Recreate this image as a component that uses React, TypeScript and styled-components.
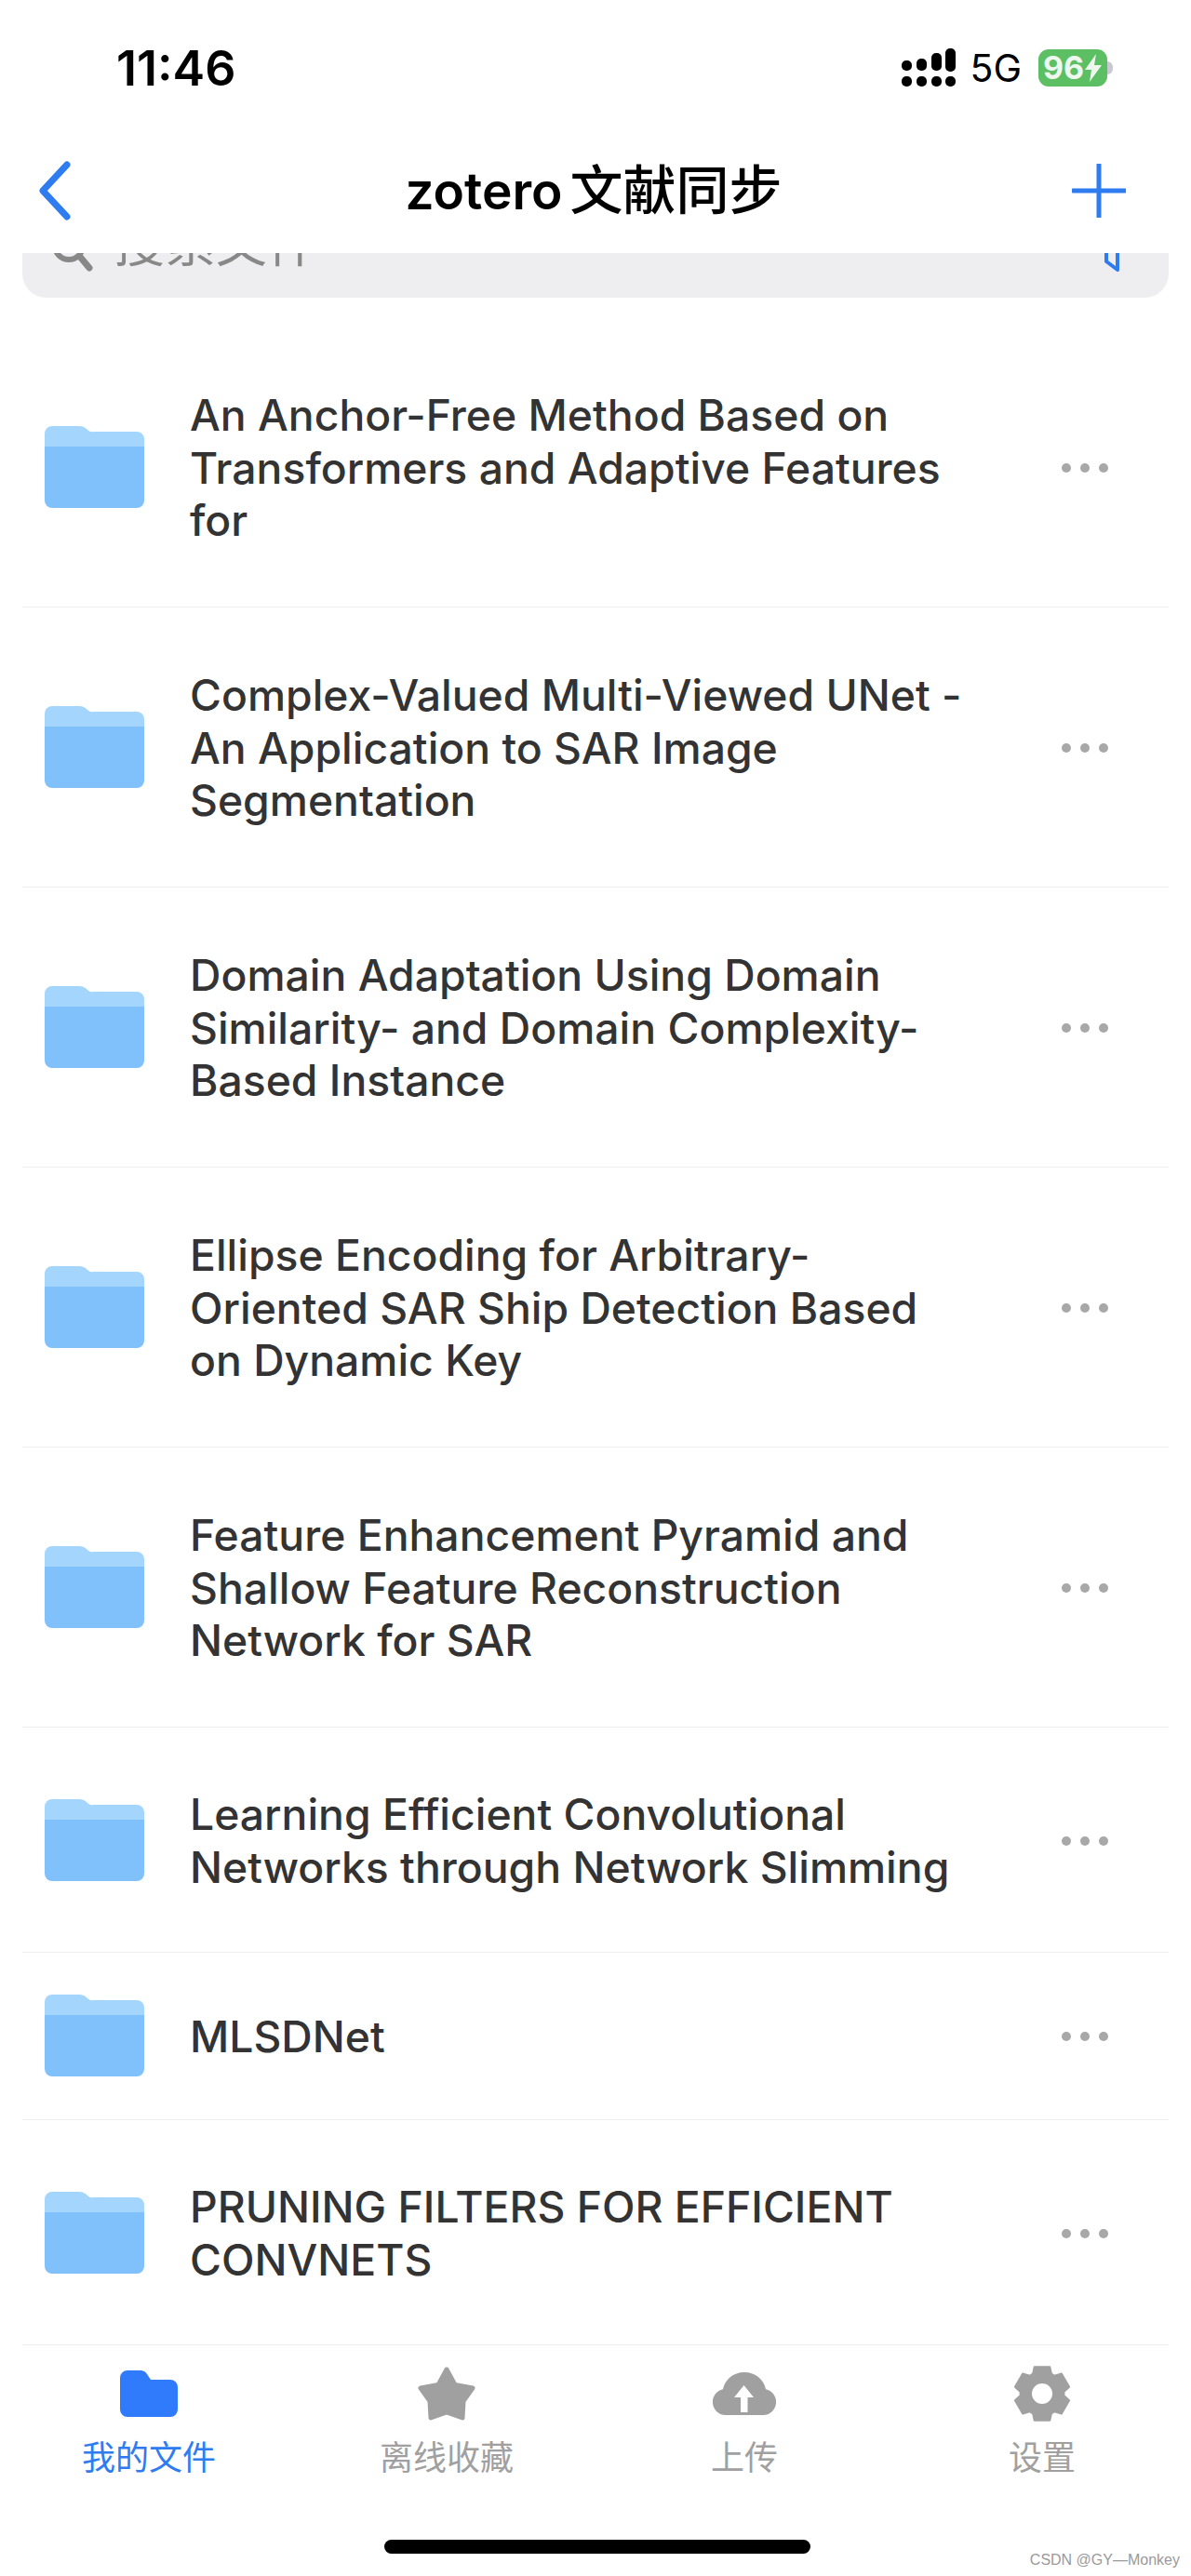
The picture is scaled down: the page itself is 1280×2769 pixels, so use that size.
import { FC } from "react";
import styled, { createGlobalStyle } from "styled-components";

interface IFile {
	id: number;
	lines: string[];
}

const files: IFile[] = [
	{ id: 1, lines: ["An Anchor-Free Method Based on", "Transformers and Adaptive Features", "for"] },
	{ id: 2, lines: ["Complex-Valued Multi-Viewed UNet -", "An Application to SAR Image", "Segmentation"] },
	{ id: 3, lines: ["Domain Adaptation Using Domain", "Similarity- and Domain Complexity-", "Based Instance"] },
	{ id: 4, lines: ["Ellipse Encoding for Arbitrary-", "Oriented SAR Ship Detection Based", "on Dynamic Key"] },
	{ id: 5, lines: ["Feature Enhancement Pyramid and", "Shallow Feature Reconstruction", "Network for SAR"] },
	{ id: 6, lines: ["Learning Efficient Convolutional", "Networks through Network Slimming"] },
	{ id: 7, lines: ["MLSDNet"] },
	{ id: 8, lines: ["PRUNING FILTERS FOR EFFICIENT", "CONVNETS"] },
];

const FolderIcon: FC = () => (
	<FolderSvg viewBox="0 0 107 88">
		<path d="M0 8a8 8 0 0 1 8-8h28c5 0 7 1 10 4s5 2 9 2h44a8 8 0 0 1 8 8v16H0z" fill="#a4d6fd" />
		<path d="M0 22h107v58a8 8 0 0 1-8 8H8a8 8 0 0 1-8-8z" fill="#80c1fc" />
	</FolderSvg>
);

// six flat teeth around the centre, like the settings icon in the tab bar
const gearPath = () => {
	const point = (radius: number, angle: number) => {
		const rad = (angle * Math.PI) / 180;
		return `${(31 + radius * Math.cos(rad)).toFixed(2)} ${(31 + radius * Math.sin(rad)).toFixed(2)}`;
	};
	const parts: string[] = [];
	for (let i = 0; i < 6; i++) {
		const a = -90 + i * 60;
		parts.push(point(23.5, a - 25), point(30, a - 16), point(30, a + 16), point(23.5, a + 25));
	}
	return `M${parts.join("L")}z`;
};

const tabs = [
	{
		label: "我的文件",
		active: true,
		icon: (
			<svg width="62" height="50" viewBox="0 0 62 50">
				<path d="M0 8a8 8 0 0 1 8-8h14c3 0 5 1 7 4l4 6h21a8 8 0 0 1 8 8v24a8 8 0 0 1-8 8H8a8 8 0 0 1-8-8z" fill="#2f7bfb" />
			</svg>
		),
	},
	{
		label: "离线收藏",
		active: false,
		icon: (
			<svg width="62" height="58" viewBox="0 0 62 58">
				<path
					d="M31 3l9 16.500 19 3.500-10 14-1 18-17-6-17 6-1-18-10-14 19-3.500z"
					fill="#a0a0a0"
					stroke="#a0a0a0"
					strokeWidth="5"
					strokeLinejoin="round"
				/>
			</svg>
		),
	},
	{
		label: "上传",
		active: false,
		icon: (
			<svg width="68" height="46" viewBox="0 0 68 46">
				<path d="M14 46a14 14 0 0 1-3-27.700C13 8 22 0 34 0s21 8 23 18.300A14 14 0 0 1 54 46z" fill="#a0a0a0" />
				<path d="M33.500 14L44 27h-6.500v16H30V27h-7z" fill="#fff" />
			</svg>
		),
	},
	{
		label: "设置",
		active: false,
		icon: (
			<svg width="62" height="62" viewBox="0 0 62 62">
				<path d={gearPath()} fill="#a0a0a0" stroke="#a0a0a0" strokeWidth="2" strokeLinejoin="round" />
				<circle cx="31" cy="31" r="11" fill="#fff" />
			</svg>
		),
	},
];

const App: FC = () => {
	return (
		<Page>
			<GlobalStyle />

			<StatusBar>
				<Time>11:46</Time>
				<StatusRight>
					<svg width="58" height="41" viewBox="0 0 58 41">
						<g fill="#000">
							<rect x="0" y="13" width="11" height="11" rx="5" />
							<rect x="16" y="11" width="11" height="13" rx="5" />
							<rect x="32" y="5" width="11" height="19" rx="5" />
							<rect x="47" y="0" width="11" height="25" rx="5" />
							<rect x="0" y="30" width="11" height="11" rx="5" />
							<rect x="16" y="30" width="11" height="11" rx="5" />
							<rect x="32" y="30" width="11" height="11" rx="5" />
							<rect x="47" y="30" width="11" height="11" rx="5" />
						</g>
					</svg>
					<Network>5G</Network>
					<Battery>
						96
						<svg width="20" height="30" viewBox="0 0 20 30">
							<path d="M13 0L1 17h7l-2 13 13-18h-8z" fill="#eef8ee" />
						</svg>
						<BatteryNub />
					</Battery>
				</StatusRight>
			</StatusBar>

			<NavBar>
				<svg width="36" height="64" viewBox="0 0 36 64">
					<path d="M31 4L5 32l26 28" fill="none" stroke="#2f7bf0" strokeWidth="7" strokeLinecap="round" strokeLinejoin="round" />
				</svg>
				<Title>
					zotero<TitleCjk>文献同步</TitleCjk>
				</Title>
				<AddIcon width="58" height="58" viewBox="0 0 58 58">
					<path d="M29 1v56M1 29h56" fill="none" stroke="#2f7bf0" strokeWidth="5" strokeLinecap="round" />
				</AddIcon>
			</NavBar>

			<SearchBar>
				<SearchLeft>
					<svg width="46" height="46" viewBox="0 0 46 46">
						<circle cx="20" cy="18" r="15" fill="none" stroke="#888" strokeWidth="6" />
						<path d="M32 30l10 12" fill="none" stroke="#888" strokeWidth="7" strokeLinecap="round" />
					</svg>
					<SearchText>搜索文件</SearchText>
				</SearchLeft>
				<svg width="16" height="44" viewBox="0 0 16 44">
					<path d="M2 0v33l12 9V0" fill="none" stroke="#2f7bf0" strokeWidth="4" strokeLinejoin="round" />
				</svg>
			</SearchBar>

			<List>
				{files.map((file) => (
					<Row key={file.id} $lines={file.lines.length}>
						<FolderIcon />
						<Name>
							{file.lines.map((line) => (
								<NameLine key={line}>{line}</NameLine>
							))}
						</Name>
						<Dots>
							<Dot />
							<Dot />
							<Dot />
						</Dots>
					</Row>
				))}
			</List>

			<TabBar>
				<TabGrid>
					{tabs.map((tab) => (
						<Tab key={tab.label} $active={tab.active}>
							<TabIcon>{tab.icon}</TabIcon>
							{tab.label}
						</Tab>
					))}
				</TabGrid>
			</TabBar>

			<HomeIndicator />
			<Watermark>CSDN @GY—Monkey</Watermark>
		</Page>
	);
};

export default App;

const rowPadding: Record<number, string> = {
	1: "45px 0 44px 24px",
	2: "65px 0 63px 24px",
	3: "66px 0 64.5px 24px",
};

const GlobalStyle = createGlobalStyle`
	* {
		box-sizing: border-box;
	}

	body {
		margin: 0;
		background-color: #fff;
	}
`;

const Page = styled.div`
	position: relative;
	width: 1280px;
	height: 2769px;
	display: flex;
	flex-direction: column;
	overflow: hidden;
	background-color: #fff;
	font-family: Inter, "Noto Sans CJK SC", sans-serif;
	color: #000;
`;

const StatusBar = styled.div`
	flex-shrink: 0;
	height: 142px;
	padding: 42px 90px 0 125px;
	display: flex;
	justify-content: space-between;
	align-items: flex-start;
`;

const Time = styled.span`
	font-size: 52px;
	line-height: 64px;
	font-weight: 600;
`;

const StatusRight = styled.div`
	margin-top: 10px;
	display: flex;
	align-items: center;
	gap: 15px;
`;

const Network = styled.span`
	margin-right: 3px;
	font-size: 41px;
	line-height: 40px;
	font-weight: 400;
`;

const Battery = styled.div`
	position: relative;
	width: 74px;
	height: 40px;
	display: flex;
	align-items: center;
	justify-content: center;
	border-radius: 11px;
	background-color: #5cbf64;
	color: #eef8ee;
	font-size: 34px;
	font-weight: 700;
`;

const BatteryNub = styled.span`
	position: absolute;
	top: 13px;
	right: -6px;
	width: 6px;
	height: 14px;
	border-radius: 0 7px 7px 0;
	background-color: #c9c8d2;
`;

const NavBar = styled.div`
	flex-shrink: 0;
	height: 130px;
	padding: 0 70px 5px 41px;
	display: grid;
	grid-template-columns: 1fr auto 1fr;
	align-items: center;
`;

const AddIcon = styled.svg`
	justify-self: end;
`;

const Title = styled.h1`
	margin: 0 0 0 25px;
	display: flex;
	align-items: center;
	gap: 8px;
	font-size: 55px;
	line-height: 64px;
	font-weight: 600;
`;

const TitleCjk = styled.span`
	font-size: 57px;
	font-weight: 500;
`;

const SearchBar = styled.div`
	flex-shrink: 0;
	height: 48px;
	margin: 0 24px;
	padding: 0 53px 28px 30px;
	display: flex;
	align-items: flex-end;
	justify-content: space-between;
	overflow: hidden;
	border-radius: 0 0 26px 26px;
	background-color: #eeeef0;
`;

const SearchLeft = styled.div`
	display: flex;
	align-items: flex-end;
	gap: 22px;
`;

const SearchText = styled.span`
	font-size: 55px;
	line-height: 62px;
	color: #888;
`;

const List = styled.ul`
	flex: 1;
	margin: 32px 24px 0;
	padding: 0;
	list-style: none;
`;

const Row = styled.li<{ $lines: number }>`
	padding: ${({ $lines }) => rowPadding[$lines]};
	display: flex;
	align-items: center;
	border-bottom: 1px solid #eeeeee;

	&:last-child {
		border-bottom: none;
	}
`;

const FolderSvg = styled.svg`
	flex-shrink: 0;
	width: 107px;
	height: 88px;
	margin-bottom: 2px;
`;

const Name = styled.p`
	flex: 1;
	margin: 0 0 0 49px;
	font-size: 46.3px;
	line-height: 56.5px;
	font-weight: 500;
	color: #333;
`;

const NameLine = styled.span`
	display: block;
	white-space: nowrap;
`;

const Dots = styled.div`
	margin-right: 65px;
	display: flex;
	gap: 10px;
`;

const Dot = styled.span`
	width: 10px;
	height: 10px;
	border-radius: 50%;
	background-color: #a8a8a8;
`;

const TabBar = styled.nav`
	flex-shrink: 0;
	height: 249px;
	margin: 0 24px;
	border-top: 1px solid #eeeeee;
`;

const TabGrid = styled.div`
	margin: 0 -24px;
	padding-top: 16px;
	display: grid;
	grid-template-columns: repeat(4, 1fr);
	align-items: start;
`;

const Tab = styled.div<{ $active: boolean }>`
	display: flex;
	flex-direction: column;
	align-items: center;
	font-size: 36px;
	line-height: 44px;
	color: ${({ $active }) => ($active ? "#2f7bf0" : "#a0a0a0")};
`;

const TabIcon = styled.div`
	height: 72px;
	margin-bottom: 11px;
	display: flex;
	align-items: center;
`;

const HomeIndicator = styled.span`
	position: absolute;
	left: 413px;
	top: 2730px;
	width: 458px;
	height: 15px;
	border-radius: 8px;
	background-color: #000;
`;

const Watermark = styled.span`
	position: absolute;
	right: 12px;
	top: 2743px;
	font-family: "Liberation Sans", sans-serif;
	font-size: 16px;
	line-height: 18px;
	color: #9a9a9a;
`;
